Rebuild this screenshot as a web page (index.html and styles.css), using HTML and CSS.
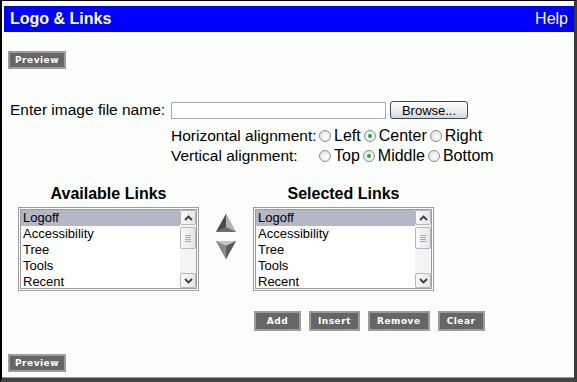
FILE: index.html
```html
<!DOCTYPE html>
<html lang="en">
<head>
    <meta charset="UTF-8">
    <title>Logo &amp; Links</title>
    <link rel="stylesheet" href="styles.css">
</head>
<body>

<div class="frame">
    <div class="titlebar">
        <span class="title">Logo &amp; Links</span>
        <span class="help">Help</span>
    </div>

    <div class="content">
        <div class="toolbar"><span class="gbtn">Preview</span></div>

        <div class="file-row">
            <span class="file-label">Enter image file name:</span>
            <span class="textfield"></span>
            <span class="browse">Browse...</span>
        </div>

        <div class="align">
            <span class="align-label">Horizontal alignment:</span>
            <span class="options">
                <span class="opt"><span class="radio"></span>Left</span>
                <span class="opt"><span class="radio checked"></span>Center</span>
                <span class="opt"><span class="radio"></span>Right</span>
            </span>
            <span class="align-label">Vertical alignment:</span>
            <span class="options">
                <span class="opt"><span class="radio"></span>Top</span>
                <span class="opt"><span class="radio checked"></span>Middle</span>
                <span class="opt"><span class="radio"></span>Bottom</span>
            </span>
        </div>

        <div class="links">
            <div class="link-col">
                <div class="link-head">Available Links</div>
                <div class="listbox">
                    <ul class="items">
                        <li class="sel">Logoff</li>
                        <li>Accessibility</li>
                        <li>Tree</li>
                        <li>Tools</li>
                        <li>Recent</li>
                    </ul>
                    <div class="vscroll">
                        <span class="sb-btn"><svg width="9" height="6" viewBox="0 0 9 6"><path d="M1 5 L4.5 1.5 L8 5" fill="none" stroke="#3c3c3c" stroke-width="1.8"/></svg></span>
                        <span class="sb-thumb"><i></i><i></i><i></i><i></i></span>
                        <span class="sb-fill"></span>
                        <span class="sb-btn"><svg width="9" height="6" viewBox="0 0 9 6"><path d="M1 1 L4.5 4.5 L8 1" fill="none" stroke="#3c3c3c" stroke-width="1.8"/></svg></span>
                    </div>
                </div>
            </div>

            <div class="movers">
                <svg width="20" height="18" viewBox="0 0 20 18">
                    <polygon points="10,0 20,18 0,18" fill="#8c8c8c"/>
                    <polygon points="10,0 10,13 0,18" fill="#4a4a4a"/>
                    <polygon points="10,0 20,18 10,13" fill="#b4b4b4"/>
                    <polygon points="0,18 10,13 20,18" fill="#6e6e6e"/>
                </svg>
                <svg width="20" height="18" viewBox="0 0 20 18">
                    <polygon points="0,0 20,0 10,18" fill="#8c8c8c"/>
                    <polygon points="0,0 20,0 10,5" fill="#c4c4c4"/>
                    <polygon points="0,0 10,5 10,18" fill="#8a8a8a"/>
                    <polygon points="20,0 10,5 10,18" fill="#5a5a5a"/>
                </svg>
            </div>

            <div class="link-col">
                <div class="link-head">Selected Links</div>
                <div class="listbox">
                    <ul class="items">
                        <li class="sel">Logoff</li>
                        <li>Accessibility</li>
                        <li>Tree</li>
                        <li>Tools</li>
                        <li>Recent</li>
                    </ul>
                    <div class="vscroll">
                        <span class="sb-btn"><svg width="9" height="6" viewBox="0 0 9 6"><path d="M1 5 L4.5 1.5 L8 5" fill="none" stroke="#3c3c3c" stroke-width="1.8"/></svg></span>
                        <span class="sb-thumb"><i></i><i></i><i></i><i></i></span>
                        <span class="sb-fill"></span>
                        <span class="sb-btn"><svg width="9" height="6" viewBox="0 0 9 6"><path d="M1 1 L4.5 4.5 L8 1" fill="none" stroke="#3c3c3c" stroke-width="1.8"/></svg></span>
                    </div>
                </div>
            </div>
        </div>

        <div class="actions">
            <span class="gbtn">Add</span>
            <span class="gbtn">Insert</span>
            <span class="gbtn">Remove</span>
            <span class="gbtn">Clear</span>
        </div>

        <div class="toolbar bottom"><span class="gbtn">Preview</span></div>
    </div>
</div>

</body>
</html>
```

FILE: styles.css
```css
body {
    margin: 0;
    background: #fcfefc;
}

.frame {
    width: 577px;
    height: 382px;
    box-sizing: border-box;
    border-left: 2px solid #000;
    border-top: 1px solid #000;
    border-right: 3px solid #3a3a3a;
    border-bottom: 4px solid #444;
    box-shadow: inset 0 -1px 0 #9a9a9a;
    background: #fcfefc;
    font-family: "Liberation Sans", Arial, sans-serif;
    color: #000;
}

.titlebar {
    margin: 5px 0 0 2px;
    height: 26px;
    padding: 0 6px;
    background: #0000ff;
    color: #fff;
    font-size: 16px;
    display: flex;
    justify-content: space-between;
    align-items: center;
}

.title {
    font-weight: bold;
}

.content {
    padding-left: 6px;
}

/* grey bevel buttons */
.toolbar {
    margin-top: 19px;
    height: 18px;
    display: flex;
}

.toolbar.bottom {
    margin-top: 23px;
}

.gbtn {
    display: inline-flex;
    align-items: center;
    justify-content: center;
    box-sizing: border-box;
    height: 18px;
    padding: 0 5px;
    border: 2px solid #9c9c9c;
    background: #666;
    color: #fff;
    font: bold 9px "DejaVu Sans", Verdana, sans-serif;
    letter-spacing: 0.5px;
}

/* file input */
.file-row {
    margin: 32px 0 0 2px;
    height: 18px;
    display: flex;
    align-items: center;
    font-size: 15.5px;
}

.file-label {
    width: 161px;
}

.textfield {
    width: 215px;
    height: 17px;
    box-sizing: border-box;
    border: 1px solid #a5acb5;
    background: #fff;
}

.browse {
    margin-left: 4px;
    width: 78px;
    height: 18px;
    box-sizing: border-box;
    border: 1px solid #3c4a5c;
    border-radius: 3px;
    background: linear-gradient(#ffffff, #ececf0 60%, #d4d4dc);
    font-size: 13px;
    display: flex;
    align-items: center;
    justify-content: center;
}

/* alignment radios */
.align {
    margin: 7px 0 0 163px;
    display: grid;
    grid-template-columns: 148px auto;
    grid-auto-rows: 20px;
    align-items: center;
    font-size: 15.5px;
}

.options {
    display: flex;
    font-size: 16px;
}

.opt {
    display: flex;
    align-items: center;
    margin-right: 3px;
}

.radio {
    width: 12px;
    height: 12px;
    box-sizing: border-box;
    border: 1px solid #8a8f98;
    border-radius: 50%;
    background: radial-gradient(circle at 60% 60%, #ffffff, #dcdcdc);
    margin-right: 3px;
    position: relative;
}

.radio.checked::after {
    content: "";
    position: absolute;
    left: 3px;
    top: 3px;
    width: 4px;
    height: 4px;
    border-radius: 50%;
    background: #2aa22a;
}

/* link lists */
.links {
    margin: 19px 0 0 10px;
    display: flex;
}

.link-col {
    width: 181px;
}

.link-head {
    height: 18px;
    line-height: 18px;
    text-align: center;
    font-weight: bold;
    font-size: 16px;
    margin-bottom: 4px;
}

.listbox {
    height: 84px;
    box-sizing: border-box;
    border: 3px double #9c9c9c;
    background: #fff;
    display: flex;
    overflow: hidden;
}

.items {
    flex: 1;
    list-style: none;
    margin: 0;
    padding: 0;
    font-size: 13px;
}

.items li {
    height: 16px;
    line-height: 16px;
    padding-left: 2px;
}

.items li.sel {
    background: #b6b7c4;
}

.vscroll {
    width: 16px;
    display: flex;
    flex-direction: column;
    background: #f4f4f2;
}

.sb-btn, .sb-thumb {
    height: 15px;
    box-sizing: border-box;
    border: 1px solid #b4b6c0;
    border-radius: 2px;
    background: linear-gradient(90deg, #fafafa, #e6e6ea);
    display: flex;
    align-items: center;
    justify-content: center;
}

.sb-thumb {
    height: 22px;
    margin-top: 2px;
    flex-direction: column;
    gap: 1px;
}

.sb-thumb i {
    width: 6px;
    height: 1px;
    background: #a8a8b0;
}

.sb-fill {
    flex: 1;
}

.movers {
    width: 54px;
    display: flex;
    flex-direction: column;
    align-items: center;
    gap: 9px;
    padding-top: 29px;
}

/* action buttons */
.actions {
    margin: 20px 0 0 246px;
    display: flex;
    gap: 8px;
}

.actions .gbtn {
    height: 20px;
    min-width: 47px;
    padding: 0 7px;
}
```
